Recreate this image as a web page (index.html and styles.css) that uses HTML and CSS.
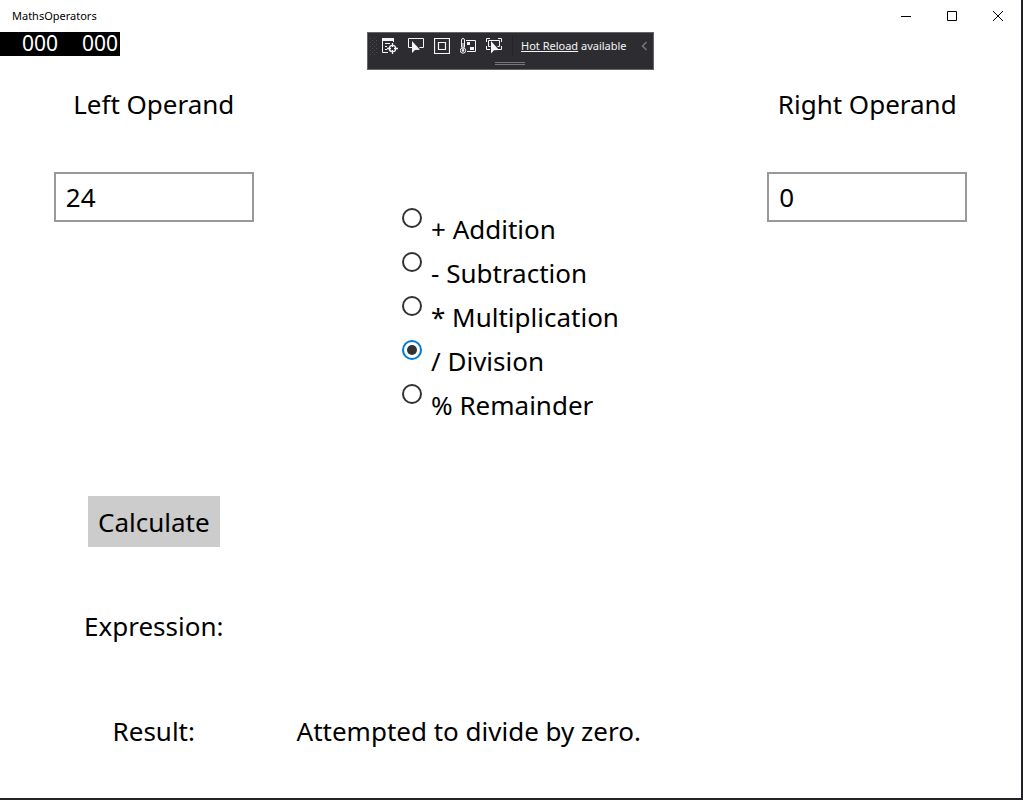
FILE: index.html
```html
<!DOCTYPE html>
<html lang="en">
<head>
<meta charset="utf-8">
<title>MathsOperators</title>
<link rel="stylesheet" href="styles.css">
</head>
<body>
<div class="window">
  <header class="titlebar">
    <span class="title">MathsOperators</span>
    <div class="caption-buttons">
      <button class="caption" type="button" aria-label="Minimize"><svg width="10" height="10" viewBox="0 0 10 10"><path d="M0 5.5h10"/></svg></button>
      <button class="caption" type="button" aria-label="Maximize"><svg width="10" height="10" viewBox="0 0 10 10"><path d="M.5.5h9v9h-9z"/></svg></button>
      <button class="caption" type="button" aria-label="Close"><svg width="10" height="10" viewBox="0 0 10 10"><path d="M0 0l10 10M10 0L0 10"/></svg></button>
    </div>
  </header>

  <div class="counters"><span>000</span><span>000</span></div>

  <div class="debugbar">
    <div class="tools">
      <svg class="grip" width="7" height="18" viewBox="0 0 7 18"><path d="M0 1.500h7M0 5.500h7M0 9.500h7M0 13.500h7M0 17.500h7" stroke-dasharray="1 3"/><path d="M2 3.500h5M2 7.500h5M2 11.500h5M2 15.500h5" stroke-dasharray="1 3"/></svg>
      <div class="icons">
        <button type="button" aria-label="Go to Live Visual Tree"><svg width="16" height="16" viewBox="0 0 16 16"><path d="M6 14.500H.5V1M11.500 4V1"/><path d="M0 1.500h12" stroke-width="3"/><path d="M3 5.500h5M3 8.500h2M3 11.500h2"/><circle cx="10.500" cy="10.500" r="3.200" stroke-width="1.300"/><path d="M10.500 5v4M10.500 12v4M5 10.500h4M12 10.500h4" stroke-width="1.300"/></svg></button>
        <button type="button" aria-label="Select Element"><svg width="16" height="16" viewBox="0 0 16 16"><path d="M4 9.500H.5v-9h15v9h-4"/><path class="solid" d="M4 3v12l3-3 5-.3z"/></svg></button>
        <button type="button" aria-label="Display Layout Adorners"><svg width="16" height="16" viewBox="0 0 16 16"><path d="M.5.5h15v15H.5zM4.500 4.500h7v7h-7z" stroke-width="1.200"/></svg></button>
        <button type="button" aria-label="Binding Failures"><svg width="16" height="16" viewBox="0 0 16 16"><path d="M1.500 9.500V2Q1.500.5 3 .5T4.500 2v7.500"/><circle cx="3" cy="12.500" r="2.700"/><circle class="solid" cx="3" cy="12.500" r="1.300"/><path d="M3 5v7M6 2.500h9.500v11H7"/><path class="solid" d="M7 4h3v3H7zM10 9h4v3h-4z"/></svg></button>
        <button type="button" aria-label="Track Focused Element"><svg width="16" height="16" viewBox="0 0 16 16"><path d="M.5 4V.5H4M12 .5h3.500V4M.5 8v3.500H4M12 11.500h3.500V8M4.500 8.500h-2v-6h11v6h-2"/><path class="solid" d="M5 3v12.500l3-3.300 5-.2z"/></svg></button>
      </div>
      <span class="divider"></span>
      <p class="reload"><a href="#">Hot Reload</a> available</p>
      <button class="collapse" type="button" aria-label="Collapse"><svg width="6" height="10" viewBox="0 0 6 10"><path d="M5.500 1L1.500 5l4 4" stroke-width="1.500"/></svg></button>
    </div>
    <span class="handle"></span>
  </div>

  <main class="content">
    <label class="cell" for="left">Left Operand</label>
    <label class="cell right" for="right">Right Operand</label>
    <div class="field"><input class="box" id="left" type="text" value="24"></div>
    <div class="operators" role="radiogroup" aria-label="Operator">
      <label class="option"><input type="radio" name="op"><span>+ Addition</span></label>
      <label class="option"><input type="radio" name="op"><span>- Subtraction</span></label>
      <label class="option"><input type="radio" name="op"><span>* Multiplication</span></label>
      <label class="option"><input type="radio" name="op" checked><span>/ Division</span></label>
      <label class="option"><input type="radio" name="op"><span>% Remainder</span></label>
    </div>
    <div class="field"><input class="box" id="right" type="text" value="0"></div>
    <div class="cell first"><button class="calculate" type="button">Calculate</button></div>
    <div class="cell first">Expression:</div>
    <div class="cell first">Result:</div>
    <output class="message">Attempted to divide by zero.</output>
  </main>
</div>
</body>
</html>
```
FILE: styles.css
```css
* { box-sizing: border-box; }
body {
  margin: 0;
  font-family: "Noto Sans", "Open Sans", sans-serif;
  color: #000;
  background: #fff;
}
button, input { font: inherit; color: inherit; }
button { border: 0; padding: 0; background: none; }
svg { display: block; fill: none; stroke: currentColor; }

.window {
  position: relative;
  display: flex;
  flex-direction: column;
  min-height: 100vh;
  border-right: 2px solid #202225;
  border-bottom: 2px solid #242428;
}

.titlebar {
  display: flex;
  justify-content: space-between;
  align-items: center;
  height: 32px;
  padding-left: 12px;
  font-size: 11px;
}
.title { line-height: 16px; }
.caption-buttons { display: flex; }
.caption {
  display: grid;
  place-items: center;
  width: 46px;
  height: 32px;
}

.counters {
  position: absolute;
  top: 32px;
  left: 0;
  display: flex;
  padding-bottom: 2px;
  background: #000;
  color: #fff;
  font-size: 21px;
  line-height: 22px;
}
.counters span { width: 60px; padding-right: 2px; text-align: right; }

.debugbar {
  position: absolute;
  top: 32px;
  left: 0;
  right: 0;
  margin: 0 auto;
  width: 287px;
  height: 38px;
  border: 1px solid #66666a;
  background: #2d2d31;
  color: #f4f4f4;
}
.tools { display: flex; align-items: center; height: 26px; padding: 0 6px 0 2px; }
.grip { color: #4b4b50; margin-right: 5px; }
.icons { display: flex; gap: 10px; }
.divider { width: 1px; height: 20px; margin: 0 8px 0 10px; background: #242427; }
.reload { flex: 1; margin: 0; font-size: 11px; line-height: 16px; white-space: nowrap; }
.reload a { color: inherit; }
.collapse { color: #77777b; }
.solid { fill: currentColor; stroke: none; }
.handle {
  display: block;
  width: 30px;
  height: 3px;
  margin: 3px 0 0 127px;
  border: solid #77777b;
  border-width: 1px 0;
}

.content {
  flex: 1;
  display: grid;
  grid-template-columns: 3fr 5fr 3fr;
  grid-template-rows: 1fr 3fr 1fr 1fr 1fr;
  padding: 20px 20px 15px;
  font-size: 26px;
  line-height: 36px;
}
.cell { display: flex; align-items: center; justify-content: center; }
.first { grid-column: 1; }
.right { grid-column: 3; }
.field { display: flex; justify-content: center; align-items: flex-start; padding-top: 16px; }
.box {
  width: 200px;
  height: 50px;
  padding: 0 10px;
  border: 2px solid #999;
  border-radius: 0;
  background: #fff;
}
.operators { display: flex; flex-direction: column; justify-content: center; align-self: center; justify-self: center; }
.option { display: flex; align-items: flex-start; height: 44px; padding-top: 5px; gap: 9px; }
.option span { padding-top: 3px; }
.option input {
  appearance: none;
  display: grid;
  place-items: center;
  width: 20px;
  height: 20px;
  margin: 0;
  border: 2px solid #333;
  border-radius: 50%;
}
.option input:checked { border-color: #0078d7; }
.option input:checked::before {
  content: "";
  width: 10px;
  height: 10px;
  border-radius: 50%;
  background: #333;
}
.calculate { height: 51px; padding: 0 10px; background: #ccc; }
.message { align-self: center; padding-left: 9px; }
```
